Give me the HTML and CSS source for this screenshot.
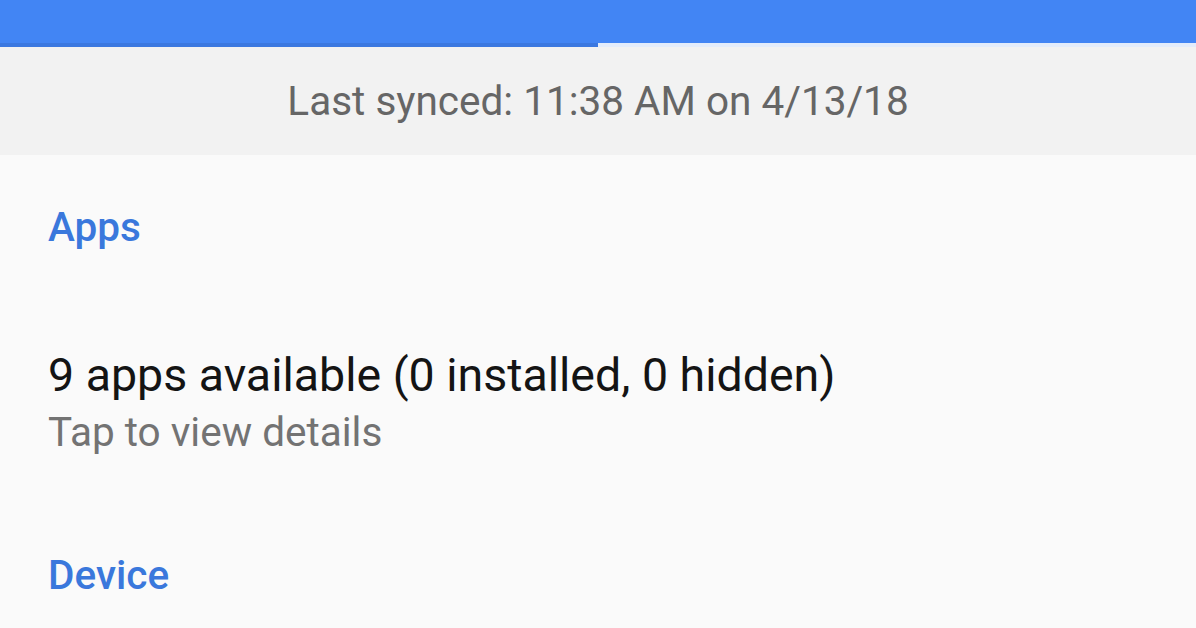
FILE: index.html
```html
<!DOCTYPE html>
<html lang="en">

<head>
    <meta charset="UTF-8">
    <meta name="viewport" content="width=device-width, initial-scale=1.0">
    <title>Sync</title>
    <link rel="stylesheet" href="styles.css">
</head>

<body>
    <div class="toolbar"></div>
    <div class="progress">
        <div class="progress-fill"></div>
    </div>

    <div class="sync-info">
        <p>Last synced: 11:38 AM on 4/13/18</p>
    </div>

    <div class="section">
        <h2 class="section-title">Apps</h2>
        <div class="item">
            <p class="item-title">9 apps available (0 installed, 0 hidden)</p>
            <p class="item-sub">Tap to view details</p>
        </div>
    </div>

    <div class="section">
        <h2 class="section-title">Device</h2>
    </div>
</body>

</html>
```

FILE: styles.css
```css
* {
    margin: 0;
    padding: 0;
    box-sizing: border-box;
    font-family: Roboto, "Noto Sans", sans-serif;
}

body {
    width: 1196px;
    height: 628px;
    overflow: hidden;
    background-color: #fafafa;
}

.toolbar {
    height: 43px;
    background-color: #4285f4;
}

.progress {
    height: 4px;
    background-color: #e3ecfb;
}

.progress-fill {
    width: 598px;
    height: 100%;
    background-color: #3b78e0;
}

.sync-info {
    height: 108px;
    display: flex;
    align-items: center;
    justify-content: center;
    background-color: #f2f2f2;
}

.sync-info p {
    font-size: 40.5px;
    color: #666;
}

.section {
    padding: 48px 48px 0;
}

.section-title {
    font-size: 40.5px;
    line-height: 48px;
    font-weight: 500;
    color: #3a78dc;
}

.item {
    padding: 96px 0 42px;
}

.item-title {
    font-size: 46.5px;
    line-height: 56px;
    color: #141414;
}

.item-sub {
    font-size: 40.5px;
    line-height: 58px;
    color: #737373;
}
```
